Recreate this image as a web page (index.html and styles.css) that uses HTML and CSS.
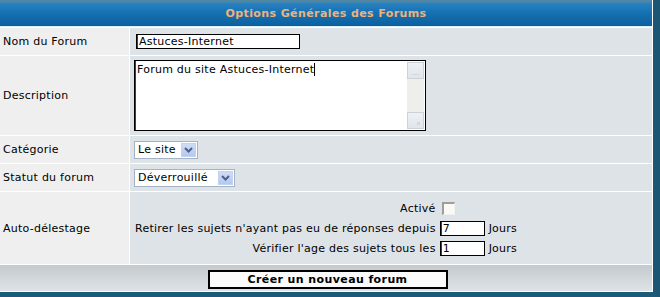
FILE: index.html
```html
<!DOCTYPE html>
<html lang="fr">
<head>
<meta charset="utf-8">
<title>Options Générales des Forums</title>
<link rel="stylesheet" href="styles.css">
</head>
<body>
<div class="forumline">
  <div class="th">Options Générales des Forums</div>

  <div class="label">Nom du Forum</div>
  <div class="field"><span class="input name">Astuces-Internet</span></div>

  <div class="label">Description</div>
  <div class="field">
    <div class="textarea">
      <div class="ta-text">Forum du site Astuces-Internet<span class="caret"></span></div>
      <div class="scrollbar">
        <span class="sb-btn"><span class="sb-mark up"></span></span>
        <span class="sb-track"></span>
        <span class="sb-btn"><span class="sb-mark down"></span></span>
      </div>
    </div>
  </div>

  <div class="label">Catégorie</div>
  <div class="field">
    <span class="select cat"><span class="sel-val">Le site</span><span class="sel-btn"><svg width="9" height="6" viewBox="0 0 9 6"><path d="M1 1 L4.5 4.5 L8 1" fill="none" stroke="#4d6185" stroke-width="2"/></svg></span></span>
  </div>

  <div class="label">Statut du forum</div>
  <div class="field">
    <span class="select statut"><span class="sel-val">Déverrouillé</span><span class="sel-btn"><svg width="9" height="6" viewBox="0 0 9 6"><path d="M1 1 L4.5 4.5 L8 1" fill="none" stroke="#4d6185" stroke-width="2"/></svg></span></span>
  </div>

  <div class="label">Auto-délestage</div>
  <div class="field">
    <div class="prune">
      <span class="p-label">Activé</span>
      <span class="p-ctrl"><span class="checkbox"></span></span>
      <span></span>
      <span class="p-label">Retirer les sujets n'ayant pas eu de réponses depuis</span>
      <span class="p-ctrl"><span class="input small">7</span></span>
      <span class="p-unit">Jours</span>
      <span class="p-label">Vérifier l'age des sujets tous les</span>
      <span class="p-ctrl"><span class="input small">1</span></span>
      <span class="p-unit">Jours</span>
    </div>
  </div>

  <div class="catbottom"><span class="mainoption">Créer un nouveau forum</span></div>
</div>
</body>
</html>
```
FILE: styles.css
```css
html, body {
  margin: 0;
  padding: 0;
  background: #ffffff;
}
body {
  font-family: "DejaVu Sans", Verdana, sans-serif;
  font-size: 11px;
  letter-spacing: 0.25px;
  color: #000;
  overflow: hidden;
}
.forumline {
  display: grid;
  grid-template-columns: 129px 522px;
  grid-template-rows: 27px 27px 79px 27px 27px 72px 26px;
  gap: 1px;
  background: #ffffff;
  padding: 0 1px 1px 0;
  border-right: 7px solid #1b5674;
  border-bottom: 6px solid #1a5b79;
  width: max-content;
}
.th {
  grid-column: 1 / -1;
  background: linear-gradient(#52879f 0, #4f87a6 2px, #2a83c2 3px, #1672b3 12px, #0c609f 26px);
  color: #eeb27a;
  font-weight: bold;
  letter-spacing: 0.4px;
  display: flex;
  align-items: center;
  justify-content: center;
  border-bottom: 1px solid #d9eef6;
}
.label {
  background: #efefef;
  display: flex;
  align-items: center;
  padding-left: 3px;
  white-space: nowrap;
}
.field {
  background: #dee3e7;
  display: flex;
  align-items: center;
  padding-left: 4px;
}
.input {
  display: inline-flex;
  align-items: center;
  box-sizing: border-box;
  background: #fff;
  border: 1px solid #000;
  box-shadow: inset 1px 0 0 #404040;
  padding-left: 2px;
  height: 15px;
  line-height: 13px;
}
.input.name {
  width: 164px;
  margin-left: 2px;
}
.input.small {
  width: 45px;
}
.textarea {
  box-sizing: border-box;
  width: 292px;
  height: 71px;
  background: #fff;
  border: 1px solid #000;
  box-shadow: inset 1px 0 0 #404040;
  display: flex;
}
.ta-text {
  flex: 1;
  padding: 2px 0 0 2px;
  line-height: 13px;
}
.caret {
  display: inline-block;
  width: 1px;
  height: 13px;
  background: #000;
  vertical-align: top;
}
.scrollbar {
  width: 17px;
  margin: 1px 1px 1px 0;
  background: #eeeeec;
  display: flex;
  flex-direction: column;
}
.sb-btn {
  box-sizing: border-box;
  height: 17px;
  border: 1px solid #c9d1da;
  background: linear-gradient(#eef1f4, #e0e5ea);
  position: relative;
}
.sb-track {
  flex: 1;
}
.sb-mark {
  position: absolute;
  background: #d3d9df;
}
.sb-mark.up {
  left: 4px;
  bottom: 3px;
  width: 7px;
  height: 1px;
}
.sb-mark.down {
  right: 3px;
  bottom: 3px;
  width: 3px;
  height: 3px;
}
.select {
  display: inline-flex;
  box-sizing: border-box;
  height: 18px;
  background: #fff;
  border: 1px solid #a5b3c4;
  align-items: stretch;
}
.select.cat { width: 64px; }
.select.statut { width: 101px; }
.sel-val {
  flex: 1;
  display: flex;
  align-items: center;
  padding-left: 3px;
}
.sel-btn {
  width: 15px;
  margin: 1px;
  background: linear-gradient(#cfdcf7, #b4c8f1);
  border: 1px solid #c2d2f2;
  box-sizing: border-box;
  display: flex;
  align-items: center;
  justify-content: center;
}
.prune {
  display: grid;
  grid-template-columns: auto auto auto;
  grid-auto-rows: 20px;
  column-gap: 4px;
  align-items: center;
  margin-top: 1px;
}
.p-label {
  text-align: right;
  white-space: nowrap;
  padding-left: 1px;
}
.p-ctrl {
  display: flex;
  align-items: center;
}
.checkbox {
  box-sizing: border-box;
  width: 13px;
  height: 13px;
  margin-left: 2px;
  background: #f9f9f5;
  border-top: 2px solid #9d9d9d;
  border-left: 2px solid #9d9d9d;
  border-right: 1px solid #f2f2f2;
  border-bottom: 1px solid #f2f2f2;
}
.catbottom {
  grid-column: 1 / -1;
  background: linear-gradient(#c4c9ce, #d3d8dc 55%, #dfe2e6);
  display: flex;
  align-items: center;
  justify-content: center;
  padding-top: 2px;
}
.mainoption {
  box-sizing: border-box;
  width: 240px;
  height: 19px;
  border: 2px solid #000;
  background: #fbfbfb;
  font-weight: bold;
  letter-spacing: 0.4px;
  display: flex;
  align-items: center;
  justify-content: center;
  margin-left: 3px;
}
```
